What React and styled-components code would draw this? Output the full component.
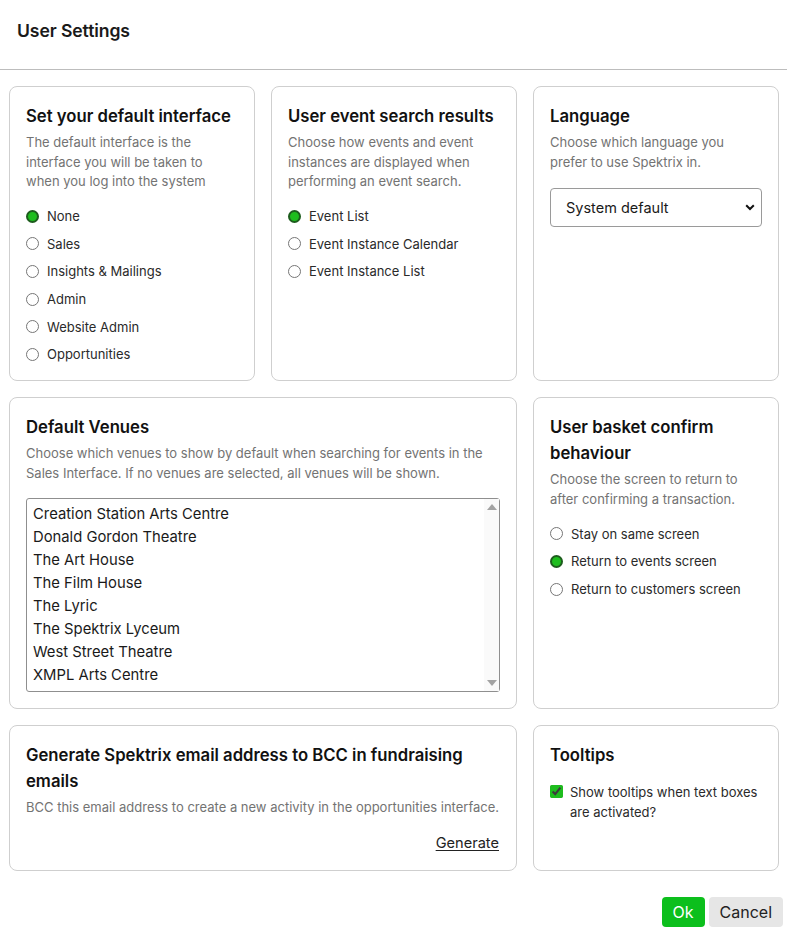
import React, { useState } from "react";
import styled, { createGlobalStyle } from "styled-components";

const GlobalStyle = createGlobalStyle`
  * { box-sizing: border-box; }
  body {
    margin: 0;
    background: #fff;
    font-family: Inter, "Noto Sans", Arial, sans-serif;
    color: #1a1a1a;
  }
`;

const GREEN = "#1ebd1e";

const Header = styled.header`
  height: 70px;
  padding: 0 17px 8px;
  display: flex;
  align-items: center;
  border-bottom: 1px solid #bdbdbd;
`;

const PageTitle = styled.h1`
  margin: 0;
  font-size: 17.6px;
  font-weight: 600;
  letter-spacing: -0.1px;
`;

const Grid = styled.div`
  display: grid;
  grid-template-columns: repeat(3, 246px);
  gap: 16px;
  padding: 16px 8px 0 9px;
`;

const Card = styled.section`
  grid-column: span ${(p) => p.span || 1};
  border: 1px solid #cfcfcf;
  border-radius: 8px;
  padding: 16px;
  display: flex;
  flex-direction: column;
`;

const CardTitle = styled.h2`
  margin: 0;
  font-size: 16.7px;
  font-weight: 600;
  line-height: 26px;
  color: #111;
`;

const Description = styled.p`
  margin: 4px 0 0;
  font-size: 13px;
  line-height: 19.5px;
  color: #737373;
`;

const OptionList = styled.div`
  margin: 11px 0 -4px;
  display: flex;
  flex-direction: column;
`;

const OptionRow = styled.label`
  display: flex;
  align-items: center;
  gap: 8px;
  height: 27.6px;
  font-size: 13px;
  color: #2a2a2a;
  cursor: pointer;
`;

const Radio = styled.input.attrs({ type: "radio" })`
  appearance: none;
  margin: 0;
  width: 13px;
  height: 13px;
  border-radius: 50%;
  border: 1px solid #767676;
  background: #fff;
  flex-shrink: 0;

  &:checked {
    border: 2px solid #1d5c1d;
    background: ${GREEN};
  }
`;

const Checkbox = styled.input.attrs({ type: "checkbox" })`
  margin: 3px 0 0 0;
  width: 13px;
  height: 13px;
  accent-color: ${GREEN};
  flex-shrink: 0;
`;

const CheckRow = styled.label`
  margin-top: 14px;
  display: flex;
  align-items: flex-start;
  gap: 7px;
  font-size: 13px;
  line-height: 20px;
  color: #2a2a2a;
`;

const SelectWrap = styled.div`
  position: relative;
  margin-top: 16px;
`;

const Select = styled.select`
  appearance: none;
  width: 100%;
  height: 39px;
  border: 1px solid #9a9a9a;
  border-radius: 4px;
  padding: 0 30px 0 15px;
  font-family: inherit;
  font-size: 14.5px;
  color: #1a1a1a;
  background: #fff;
`;

const Chevron = styled.svg`
  position: absolute;
  right: 7px;
  top: 16px;
  pointer-events: none;
`;

const Listbox = styled.div`
  margin-top: 15px;
  height: 194px;
  border: 1px solid #8f8f8f;
  border-radius: 3px;
  display: flex;
`;

const ListItems = styled.ul`
  flex: 1;
  list-style: none;
  margin: 0;
  padding: 4px 6px;
`;

const ListItem = styled.li`
  height: 23px;
  line-height: 23px;
  font-size: 14.8px;
  color: #1a1a1a;
`;

const Scrollbar = styled.div`
  width: 15px;
  background: #fafafa;
  display: flex;
  flex-direction: column;
  justify-content: space-between;
  align-items: center;
  padding: 5px 0;
`;

const Arrow = styled.span`
  width: 0;
  height: 0;
  border-left: 5px solid transparent;
  border-right: 5px solid transparent;
  ${(p) =>
    p.$down
      ? "border-top: 6px solid #a3a3a3;"
      : "border-bottom: 6px solid #a3a3a3;"}
`;

const LinkRow = styled.div`
  margin: 16px 0 2px;
  padding-right: 1px;
  display: flex;
  justify-content: flex-end;
`;

const Link = styled.a`
  font-size: 14.6px;
  color: #222;
  text-decoration: underline;
  text-underline-offset: 2px;
  cursor: pointer;
`;

const Footer = styled.div`
  display: flex;
  justify-content: flex-end;
  gap: 4px;
  padding: 26px 4px 0 0;
`;

const Button = styled.button`
  height: 30px;
  padding: 0 11px;
  border: none;
  border-radius: 4px;
  font-family: inherit;
  font-size: 16px;
  background: ${(p) => (p.$primary ? "#0cbf1c" : "#e6e6e6")};
  color: ${(p) => (p.$primary ? "#fff" : "#222")};
  cursor: pointer;
`;

const interfaces = [
  "None",
  "Sales",
  "Insights & Mailings",
  "Admin",
  "Website Admin",
  "Opportunities",
];
const searchResults = ["Event List", "Event Instance Calendar", "Event Instance List"];
const basketOptions = [
  "Stay on same screen",
  "Return to events screen",
  "Return to customers screen",
];
const venues = [
  "Creation Station Arts Centre",
  "Donald Gordon Theatre",
  "The Art House",
  "The Film House",
  "The Lyric",
  "The Spektrix Lyceum",
  "West Street Theatre",
  "XMPL Arts Centre",
];

const RadioGroup = ({ name, options, value, onChange }) => (
  <OptionList>
    {options.map((opt) => (
      <OptionRow key={opt}>
        <Radio name={name} checked={value === opt} onChange={() => onChange(opt)} />
        {opt}
      </OptionRow>
    ))}
  </OptionList>
);

export default function App() {
  const [iface, setIface] = useState("None");
  const [search, setSearch] = useState("Event List");
  const [basket, setBasket] = useState("Return to events screen");
  const [tooltips, setTooltips] = useState(true);

  return (
    <>
      <GlobalStyle />
      <Header>
        <PageTitle>User Settings</PageTitle>
      </Header>
      <Grid>
        <Card>
          <CardTitle>Set your default interface</CardTitle>
          <Description>
            The default interface is the interface you will be taken to when you log into the
            system
          </Description>
          <RadioGroup name="iface" options={interfaces} value={iface} onChange={setIface} />
        </Card>
        <Card>
          <CardTitle>User event search results</CardTitle>
          <Description>
            Choose how events and event instances are displayed when performing an event search.
          </Description>
          <RadioGroup name="search" options={searchResults} value={search} onChange={setSearch} />
        </Card>
        <Card>
          <CardTitle>Language</CardTitle>
          <Description>Choose which language you prefer to use Spektrix in.</Description>
          <SelectWrap>
            <Select defaultValue="default">
              <option value="default">System default</option>
            </Select>
            <Chevron width="10" height="7" viewBox="0 0 10 7">
              <path d="M1.2 1.2l3.8 3.8 3.8-3.8" fill="none" stroke="#111" strokeWidth="2" />
            </Chevron>
          </SelectWrap>
        </Card>

        <Card span={2}>
          <CardTitle>Default Venues</CardTitle>
          <Description>
            Choose which venues to show by default when searching for events in the Sales
            Interface. If no venues are selected, all venues will be shown.
          </Description>
          <Listbox>
            <ListItems>
              {venues.map((v) => (
                <ListItem key={v}>{v}</ListItem>
              ))}
            </ListItems>
            <Scrollbar>
              <Arrow />
              <Arrow $down />
            </Scrollbar>
          </Listbox>
        </Card>
        <Card>
          <CardTitle>User basket confirm behaviour</CardTitle>
          <Description>Choose the screen to return to after confirming a transaction.</Description>
          <RadioGroup name="basket" options={basketOptions} value={basket} onChange={setBasket} />
        </Card>

        <Card span={2}>
          <CardTitle>Generate Spektrix email address to BCC in fundraising emails</CardTitle>
          <Description>
            BCC this email address to create a new activity in the opportunities interface.
          </Description>
          <LinkRow>
            <Link>Generate</Link>
          </LinkRow>
        </Card>
        <Card>
          <CardTitle>Tooltips</CardTitle>
          <CheckRow>
            <Checkbox checked={tooltips} onChange={(e) => setTooltips(e.target.checked)} />
            Show tooltips when text boxes are activated?
          </CheckRow>
        </Card>
      </Grid>
      <Footer>
        <Button $primary>Ok</Button>
        <Button>Cancel</Button>
      </Footer>
    </>
  );
}
